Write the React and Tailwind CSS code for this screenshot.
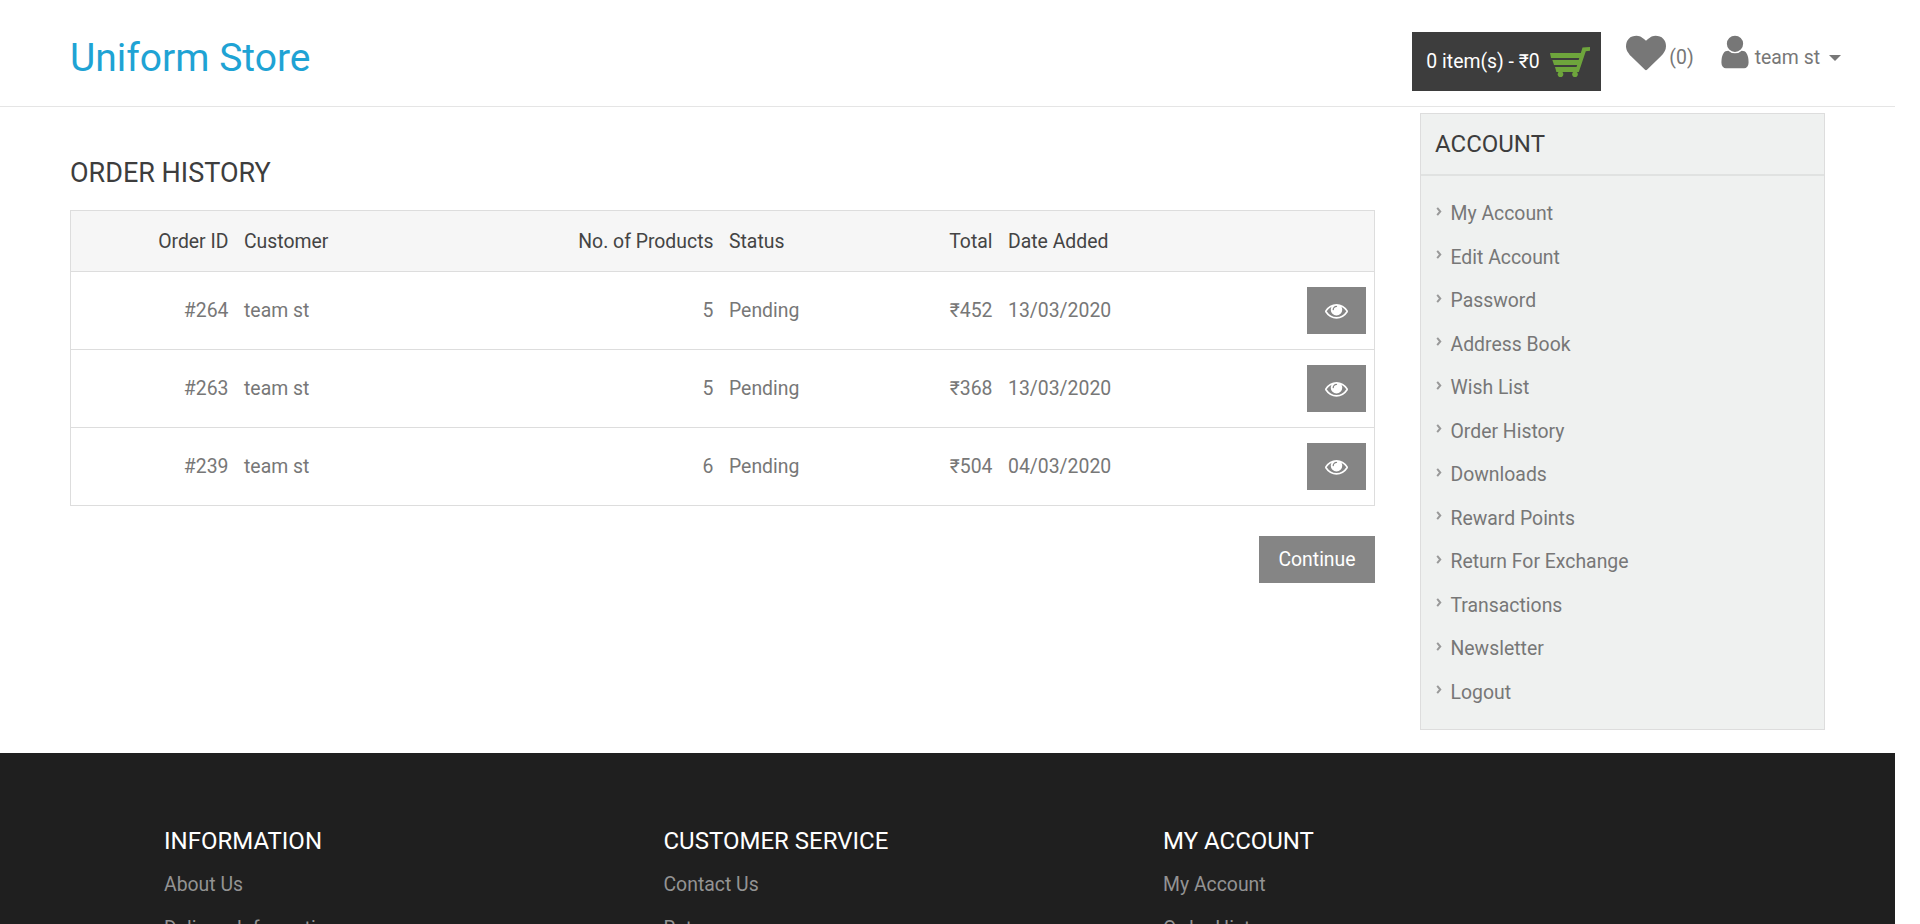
const USER = "M1536 1399q0 109-62.500 187t-150.500 78h-854q-88 0-150.500-78t-62.500-187q0-85 8.500-160.500t31.500-152 58.500-131 94-89 134.500-34.500q131 128 313 128t313-128q76 0 134.500 34.500t94 89 58.500 131 31.500 152 8.500 160.500zm-256-887q0 159-112.500 271.500t-271.500 112.500-271.500-112.500-112.500-271.500 112.500-271.500 271.500-112.500 271.500 112.500 112.500 271.500z";
const HEART = "M896 1664q-26 0-44-18l-624-602q-10-8-27.500-26t-55.500-65.500-68-97.500-53.500-121-23.500-138q0-220 127-344t351-124q62 0 126.500 21.500t120 58 95.500 68.500 76 68q36-36 76-68t95.500-68.500 120-58 126.500-21.500q224 0 351 124t127 344q0 221-229 450l-623 600q-18 18-44 18z";
const EYE = "M1664 960q-152-236-381-353 61 104 61 225 0 185-131.500 316.500t-316.500 131.500-316.500-131.500-131.500-316.500q0-121 61-225-229 117-381 353 133 205 333.500 326.500t434.500 121.500 434.500-121.500 333.500-326.500zm-720-384q0-20-14-34t-34-14q-125 0-214.500 89.500t-89.500 214.500q0 20 14 34t34 14 34-14 14-34q0-86 61-147t147-61q20 0 34-14t14-34zm848 384q0 34-20 69-140 230-376.500 368.500t-499.500 138.500-499.500-139-376.500-368q-20-35-20-69t20-69q140-229 376.500-368t499.500-139 499.500 139 376.500 368q20 35 20 69z";

function Fa({ d, size, className }) {
  return (
    <svg viewBox="0 0 1792 1792" width={size} height={size} className={className} fill="currentColor">
      <path d={d} />
    </svg>
  );
}

function Cart() {
  return (
    <svg viewBox="0 0 40 30" width="42" height="30" className="shrink-0 text-[#6ea53c]" fill="currentColor">
      <path d="M0 6H31V11H1z" />
      <path d="M2.400 13H29V18H4z" />
      <path d="M5 20H27V25H6.400z" />
      <path d="M32.500 0.600L40 0V3.800L35.800 4.200L28.800 25H25z" />
      <circle cx="10.500" cy="27.200" r="2.800" />
      <circle cx="25" cy="27.200" r="2.800" />
    </svg>
  );
}

function Chevron() {
  return (
    <svg viewBox="0 0 6 10" width="6" height="9" className="mr-[8.500px] mb-[5px] shrink-0 text-[#999]" fill="none" stroke="currentColor" strokeWidth="2.200">
      <path d="M1 1l3.400 4-3.400 4" />
    </svg>
  );
}

const rows = [
  ["#264", "5", "₹452", "13/03/2020"],
  ["#263", "5", "₹368", "13/03/2020"],
  ["#239", "6", "₹504", "04/03/2020"],
];

const account = ["My Account", "Edit Account", "Password", "Address Book", "Wish List", "Order History", "Downloads", "Reward Points", "Return For Exchange", "Transactions", "Newsletter", "Logout"];

const footer = [
  ["INFORMATION", ["About Us", "Delivery Information"]],
  ["CUSTOMER SERVICE", ["Contact Us", "Returns"]],
  ["MY ACCOUNT", ["My Account", "Order History"]],
];

export default function App() {
  return (
    <div className="h-screen overflow-hidden bg-white font-['Roboto',sans-serif] text-[19.4px] text-[#777]">
      <div className="w-[1895px]">
        <header className="flex h-[107px] items-center border-b border-[#e5e5e5] pr-[54px] pl-[70px]">
          <div className="mt-[10px] text-[39px] leading-none text-[#1fa3d4]">Uniform Store</div>
          <div className="ml-auto flex items-center">
            <div className="mt-[17px] flex h-[59px] w-[189px] items-center bg-[#3d3d3d] pl-[14px] text-white">
              <span>0 item(s) - ₹0</span>
              <span className="ml-[9px]"><Cart /></span>
            </div>
            <div className="ml-[28px] flex items-center">
              <Fa d={HEART} size={40} className="-mx-[3px] text-[#777]" />
              <span className="mt-[10px] ml-[6px]">(0)</span>
            </div>
            <div className="ml-[27px] flex items-center">
              <Fa d={USER} size={38} className="-mx-[5px] mb-[2px] text-[#777]" />
              <span className="mt-[9px] ml-[6px]">team st</span>
              <span className="mt-[10px] ml-[9px] h-0 w-0 border-x-[6px] border-t-[6px] border-x-transparent border-t-[#777]" />
            </div>
          </div>
        </header>

        <div className="flex">
          <main className="ml-[70px] w-[1305px] shrink-0">
            <h1 className="mt-[50px] text-[27px] leading-[32px] font-normal text-[#3d3d3d]">ORDER HISTORY</h1>
            <table className="mt-[21px] w-full table-fixed border-collapse border border-[#ddd]">
              <colgroup>
                <col className="w-[166px]" />
                <col className="w-[300px]" />
                <col className="w-[185px]" />
                <col className="w-[150px]" />
                <col className="w-[129px]" />
                <col className="w-[216px]" />
                <col />
              </colgroup>
              <thead>
                <tr className="h-[61px] bg-[#f6f6f6] text-[#444]">
                  <th className="pt-[2px] pr-2 text-right font-normal">Order ID</th>
                  <th className="pt-[2px] pl-[7.500px] text-left font-normal">Customer</th>
                  <th className="pt-[2px] pr-2 text-right font-normal whitespace-nowrap">No. of Products</th>
                  <th className="pt-[2px] pl-[7.500px] text-left font-normal">Status</th>
                  <th className="pt-[2px] pr-2 text-right font-normal">Total</th>
                  <th className="pt-[2px] pl-[7.500px] text-left font-normal">Date Added</th>
                  <th />
                </tr>
              </thead>
              <tbody>
                {rows.map((r) => (
                  <tr key={r[0]} className="h-[78px] border-t border-[#ddd]">
                    <td className="pr-2 text-right">{r[0]}</td>
                    <td className="pl-[7.500px]">team st</td>
                    <td className="pr-2 text-right">{r[1]}</td>
                    <td className="pl-[7.500px]">Pending</td>
                    <td className="pr-2 text-right">{r[2]}</td>
                    <td className="pl-[7.500px]">{r[3]}</td>
                    <td className="px-2">
                      <div className="ml-auto flex h-[47px] w-[59px] items-center justify-center bg-[#858585] text-white">
                        <Fa d={EYE} size={23} />
                      </div>
                    </td>
                  </tr>
                ))}
              </tbody>
            </table>
            <div className="mt-[30px] flex justify-end">
              <button className="flex h-[47px] w-[116px] items-center justify-center bg-[#858585] text-white">Continue</button>
            </div>
          </main>

          <aside className="mt-[6px] mb-[23px] ml-[45px] h-[617px] w-[405px] shrink-0 border border-[#ddd] bg-[#eff1f0]">
            <div className="flex h-[62px] items-center border-b-2 border-[#e0e2e1] pl-[14px] text-[24px] text-[#3d3d3d]">ACCOUNT</div>
            <ul className="pt-[16px]">
              {account.map((a) => (
                <li key={a} className="flex h-[43.500px] items-center pl-[15px]">
                  <Chevron />
                  <span>{a}</span>
                </li>
              ))}
            </ul>
          </aside>
        </div>

        <footer className="h-[400px] bg-[#1f1f1f] pt-[71px] pl-[164px]">
          <div className="grid grid-cols-[499.500px_499.500px_499.500px]">
            {footer.map(([title, links]) => (
              <div key={title}>
                <div className="text-[24px] leading-[34px] text-white">{title}</div>
                <ul className="mt-[5px]">
                  {links.map((l) => (
                    <li key={l} className="h-[44px] leading-[44px] text-[#939393]">{l}</li>
                  ))}
                </ul>
              </div>
            ))}
          </div>
        </footer>
      </div>
    </div>
  );
}
